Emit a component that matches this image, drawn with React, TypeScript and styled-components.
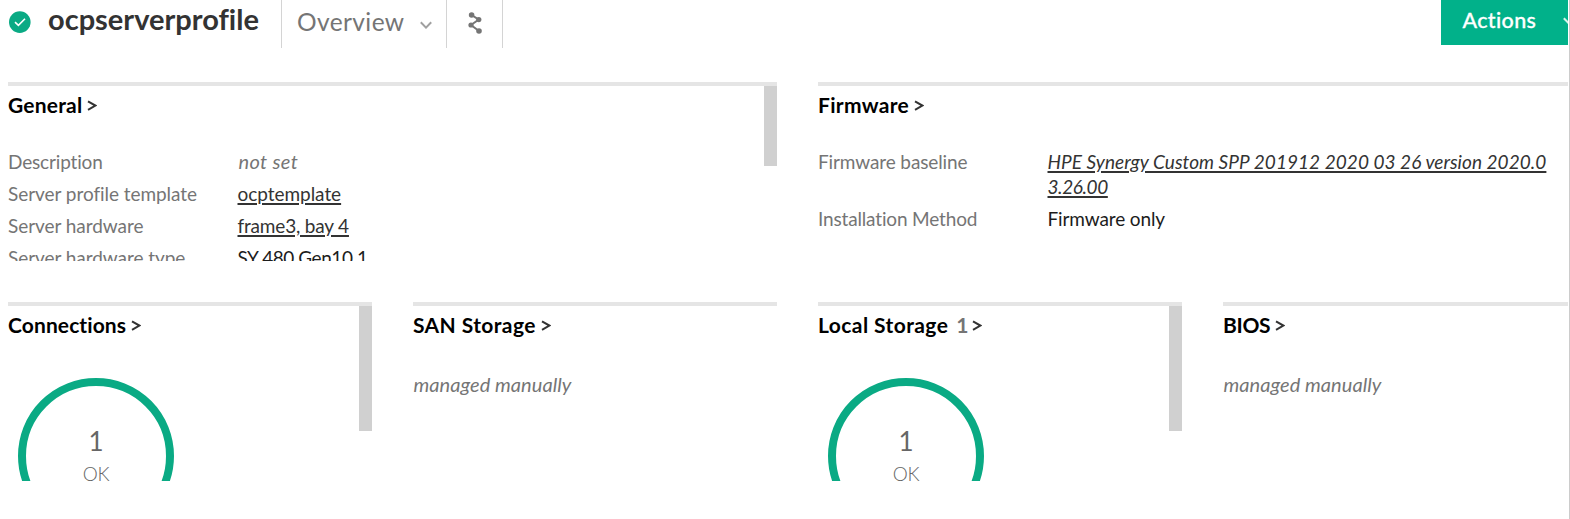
import React from 'react';
import styled, { createGlobalStyle } from 'styled-components';

const GlobalStyle = createGlobalStyle`
  * { box-sizing: border-box; }
  body {
    margin: 0;
    background: #fff;
    overflow: hidden;
    font-family: Lato, "Open Sans", sans-serif;
    font-variant-ligatures: none;
  }
`;

const Page = styled.div`
  width: 1570px;
  height: 519px;
  padding-right: 1px;
  border-right: 1px solid #ccc;
  overflow: hidden;
`;

const Main = styled.main`
  width: 1568px;
  height: 519px;
  overflow: hidden;
`;

const Header = styled.header`
  display: flex;
  align-items: flex-start;
  height: 82px;
  padding-left: 8px;
`;

const StatusIcon = styled.svg`
  flex: none;
  width: 24px;
  height: 24px;
  margin: 10px 0 0 0;
`;

const Title = styled.h1`
  width: 233px;
  margin: 0 0 0 16px;
  font-size: 29px;
  font-weight: 700;
  line-height: 38px;
  color: #333;
  white-space: nowrap;
`;

const HeaderCell = styled.div<{ $width: number; $last?: boolean }>`
  display: flex;
  flex: none;
  width: ${(p) => p.$width}px;
  height: 48px;
  border-left: 1px solid #d4d4d4;
  border-right: ${(p) => (p.$last ? '1px solid #d4d4d4' : '0')};
`;

const ViewName = styled.span`
  width: 123px;
  margin-left: 15px;
  font-size: 24.5px;
  letter-spacing: 0.4px;
  line-height: 43px;
  color: #757575;
`;

const Chevron = styled.svg`
  flex: none;
  width: 12px;
  height: 8px;
  margin-top: 20.5px;
`;

const MapIcon = styled.svg`
  width: 16px;
  height: 24px;
  margin: 11px 0 0 20px;
`;

const ActionsButton = styled.div`
  display: flex;
  flex: none;
  width: 150px;
  height: 45px;
  margin-left: auto;
  margin-right: -23px;
  padding-left: 21.5px;
  background: #01b18a;
  color: #fff;
  font-size: 21.5px;
  font-weight: 500;
  letter-spacing: 0.35px;
  line-height: 40px;
  -webkit-text-stroke: 0.3px #fff;
`;

const ActionsChevron = styled.svg`
  flex: none;
  width: 12px;
  height: 8px;
  margin: 17px 0 0 27px;
`;

const Grid = styled.div`
  display: grid;
  grid-template-columns: repeat(4, 364px);
  grid-template-rows: 179px 179px;
  column-gap: 41px;
  row-gap: 41px;
  margin-left: 8px;
`;

const PanelBox = styled.section<{ $wide?: boolean }>`
  display: flex;
  justify-content: space-between;
  grid-column: span ${(p) => (p.$wide ? 2 : 1)};
  border-top: 4px solid #e5e5e5;
  overflow: hidden;
`;

const PanelBody = styled.div`
  flex: 1;
  min-width: 0;
`;

const Heading = styled.h2<{ $track: number }>`
  display: flex;
  margin: 6px 0 31px;
  font-size: 21px;
  font-weight: 700;
  line-height: 26px;
  letter-spacing: ${(p) => p.$track}px;
  color: #000;
  white-space: nowrap;
`;

const Count = styled.span`
  margin-left: 8px;
  color: #757575;
`;

const Arrow = styled.svg<{ $gap: number }>`
  width: 10px;
  height: 12px;
  margin-top: 8px;
  margin-left: ${(p) => p.$gap}px;
`;

const ScrollThumb = styled.div<{ $height: number }>`
  flex: none;
  width: 13px;
  height: ${(p) => p.$height}px;
  background: #d0d0d0;
`;

const Row = styled.div`
  display: flex;
  margin-bottom: 7px;
  font-size: 19px;
  line-height: 25px;
`;

const Label = styled.span<{ $track?: number }>`
  flex: none;
  width: 229.5px;
  letter-spacing: ${(p) => p.$track ?? -0.05}px;
  color: #757575;
`;

const Value = styled.span<{ $track?: number; $muted?: boolean }>`
  padding-left: ${(p) => (p.$muted ? '1px' : '0')};
  font-size: ${(p) => (p.$muted ? '20px' : '19px')};
  letter-spacing: ${(p) => p.$track ?? 0}px;
  font-style: ${(p) => (p.$muted ? 'italic' : 'normal')};
  color: ${(p) => (p.$muted ? '#757575' : '#1c1c1c')};
`;

const Link = styled(Value)<{ $italic?: boolean }>`
  font-style: ${(p) => (p.$italic ? 'italic' : 'normal')};
  color: #333;
  white-space: nowrap;
  text-decoration: underline;
  text-decoration-thickness: 2px;
  text-underline-offset: 2px;
`;

const WrappedTail = styled.span`
  letter-spacing: -0.4px;
`;

const Note = styled.p`
  margin: 34px 0 0 0.5px;
  font-size: 20px;
  font-style: italic;
  line-height: 25px;
  letter-spacing: 0.06px;
  color: #757575;
`;

const Donut = styled.div`
  display: flex;
  flex-direction: column;
  align-items: center;
  width: 156px;
  height: 156px;
  margin: 40px 0 0 9.5px;
  padding: 39.5px 0 0 1px;
  border: 8px solid #0aaa84;
  border-radius: 50%;
  color: #666;
`;

const DonutCount = styled.span`
  font-size: 26px;
  line-height: 30px;
`;

const DonutLabel = styled.span`
  margin-top: 4.5px;
  font-size: 19px;
  font-weight: 300;
  letter-spacing: -0.4px;
  line-height: 28px;
`;

interface PanelProps {
  title: string;
  track?: number;
  count?: number;
  wide?: boolean;
  thumb?: number;
  children: React.ReactNode;
}

function Panel({ title, track = 0, count, wide, thumb, children }: PanelProps) {
  return (
    <PanelBox $wide={wide}>
      <PanelBody>
        <Heading $track={track}>
          {title}
          {count !== undefined && <Count>{count}</Count>}
          <Arrow $gap={count === undefined ? 5 : 3} viewBox="0 0 10 12">
            <path d="M1 1.4 8.4 5.6 1 9.8" fill="none" stroke="#333" strokeWidth="2" />
          </Arrow>
        </Heading>
        {children}
      </PanelBody>
      {thumb && <ScrollThumb $height={thumb} />}
    </PanelBox>
  );
}

function StatusDonut({ count }: { count: number }) {
  return (
    <Donut>
      <DonutCount>{count}</DonutCount>
      <DonutLabel>OK</DonutLabel>
    </Donut>
  );
}

export default function App() {
  return (
    <>
      <GlobalStyle />
      <Page>
        <Main>
          <Header>
            <StatusIcon viewBox="0 0 24 24">
              <circle cx="11.8" cy="12.1" r="10.8" fill="#0aaa84" />
              <path d="M7 12.2 10.4 15.4 17 8.8" fill="none" stroke="#fff" strokeWidth="1.6" />
            </StatusIcon>
            <Title>ocpserverprofile</Title>
            <HeaderCell $width={165}>
              <ViewName>Overview</ViewName>
              <Chevron viewBox="0 0 12 8">
                <path d="M0.8 1.2 6 6.6 11.2 1.2" fill="none" stroke="#a0a0a0" strokeWidth="2" />
              </Chevron>
            </HeaderCell>
            <HeaderCell $width={57} $last>
              <MapIcon viewBox="0 0 16 24">
                <path d="M4.6 4 11.8 8.6 4 14 12 20" fill="none" stroke="#757575" strokeWidth="2" />
                <circle cx="4.6" cy="4" r="2.8" fill="#757575" />
                <circle cx="11.8" cy="8.6" r="2.6" fill="#757575" />
                <circle cx="4" cy="14" r="2.6" fill="#757575" />
                <circle cx="12" cy="20" r="2.8" fill="#757575" />
              </MapIcon>
            </HeaderCell>
            <ActionsButton>
              Actions
              <ActionsChevron viewBox="0 0 12 8">
                <path d="M0.8 1.2 6 6.6 11.2 1.2" fill="none" stroke="#d5f3ea" strokeWidth="2" />
              </ActionsChevron>
            </ActionsButton>
          </Header>

          <Grid>
            <Panel title="General" track={0.2} wide thumb={80}>
              <Row>
                <Label $track={-0.16}>Description</Label>
                <Value $track={0.35} $muted>not set</Value>
              </Row>
              <Row>
                <Label>Server profile template</Label>
                <Link $track={-0.04}>ocptemplate</Link>
              </Row>
              <Row>
                <Label>Server hardware</Label>
                <Link $track={-0.18}>frame3, bay 4</Link>
              </Row>
              <Row>
                <Label>Server hardware type</Label>
                <Value $track={-0.45}>SY 480 Gen10 1</Value>
              </Row>
            </Panel>

            <Panel title="Firmware" track={0.3} wide>
              <Row>
                <Label $track={-0.12}>Firmware baseline</Label>
                <Link $italic $track={0.05}>
                  HPE Synergy Custom SPP 201912 2020 03 26 version 2020.0
                  <br />
                  <WrappedTail>3.26.00</WrappedTail>
                </Link>
              </Row>
              <Row>
                <Label $track={-0.16}>Installation Method</Label>
                <Value $track={-0.12}>Firmware only</Value>
              </Row>
            </Panel>

            <Panel title="Connections" track={0.1} thumb={125}>
              <StatusDonut count={1} />
            </Panel>

            <Panel title="SAN Storage" track={0.4}>
              <Note>managed manually</Note>
            </Panel>

            <Panel title="Local Storage" track={0.42} count={1} thumb={125}>
              <StatusDonut count={1} />
            </Panel>

            <Panel title="BIOS" track={-0.3}>
              <Note>managed manually</Note>
            </Panel>
          </Grid>
        </Main>
      </Page>
    </>
  );
}
